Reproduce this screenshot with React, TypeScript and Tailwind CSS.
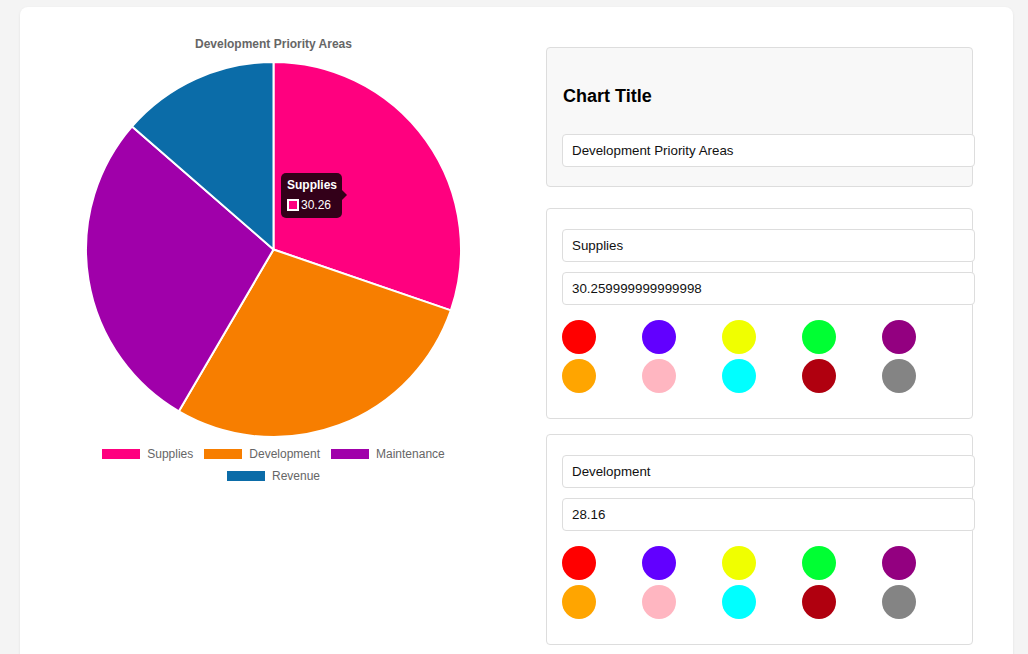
import React from "react";

const slices = [
  { label: "Supplies", value: 30.26, color: "#ff007f" },
  { label: "Development", value: 28.16, color: "#f77e00" },
  { label: "Maintenance", value: 27.98, color: "#a000aa" },
  { label: "Revenue", value: 13.6, color: "#0b6ca8" },
];

const palette = [
  ["bg-[#ff0000]", "bg-[#6200ff]", "bg-[#f0ff00]", "bg-[#00ff33]", "bg-[#930080]"],
  ["bg-[#ffa500]", "bg-[#ffb6c1]", "bg-[#00ffff]", "bg-[#b0000f]", "bg-[#848484]"],
];

function Pie() {
  const cx = 253.5;
  const cy = 189.5;
  const r = 187.5;
  const total = slices.reduce((s, x) => s + x.value, 0);
  let a = -Math.PI / 2;
  const paths = slices.map((s) => {
    const start = a;
    const end = a + (s.value / total) * Math.PI * 2;
    a = end;
    const x1 = cx + r * Math.cos(start);
    const y1 = cy + r * Math.sin(start);
    const x2 = cx + r * Math.cos(end);
    const y2 = cy + r * Math.sin(end);
    const large = end - start > Math.PI ? 1 : 0;
    return (
      <path
        key={s.label}
        d={`M${cx},${cy} L${x1},${y1} A${r},${r} 0 ${large} 1 ${x2},${y2} Z`}
        fill={s.color}
        stroke="#fff"
        strokeWidth={2}
        strokeLinejoin="round"
      />
    );
  });
  return (
    <svg width={507} height={380} className="block">
      {paths}
    </svg>
  );
}

function Field({ value }: { value: string }) {
  return (
    <div className="w-[413px] h-[33px] border border-[#dddddd] rounded-[4px] bg-white pl-[9px] flex items-center text-[13.33px] text-[#111]">
      {value}
    </div>
  );
}

function Swatches() {
  return (
    <div className="flex flex-col gap-[5px] mt-[15px]">
      {palette.map((row, i) => (
        <div key={i} className="flex gap-[46px]">
          {row.map((c) => (
            <div key={c} className={`w-[34px] h-[34px] rounded-full ${c}`} />
          ))}
        </div>
      ))}
    </div>
  );
}

function SeriesPanel({ name, value }: { name: string; value: string }) {
  return (
    <div className="w-[427px] border border-[#dddddd] rounded-[4px] bg-white pl-[15px] pt-[20px] pb-[25px]">
      <Field value={name} />
      <div className="mt-[10px]">
        <Field value={value} />
      </div>
      <Swatches />
    </div>
  );
}

function LegendItem({ label, color }: { label: string; color: string }) {
  return (
    <div className="flex items-center gap-[7px] text-[12px] text-[#666]">
      <div className="w-[38px] h-[10px]" style={{ backgroundColor: color }} />
      <span>{label}</span>
    </div>
  );
}

export default function App() {
  return (
    <div
      className="min-h-[654px] bg-[#f4f4f4] pl-[20px] pr-[15px] pt-[7px]"
      style={{ fontFamily: '"Liberation Sans", Arial, Helvetica, sans-serif' }}
    >
      <div className="bg-white rounded-[8px] shadow-[0_1px_3px_rgba(0,0,0,0.08)] flex min-h-[660px]">
        <div className="w-[507px] pt-[30px] flex flex-col items-center">
          <div className="text-[12px] leading-[14px] font-bold text-[#666]">Development Priority Areas</div>
          <div className="relative mt-[9px]">
            <Pie />
            <div className="absolute left-[261px] top-[113px] w-[61px] h-[45px] rounded-[5px] bg-[rgba(0,0,0,0.8)] text-white px-[6px] pt-[5px]">
              <div className="text-[12px] leading-[14px] font-bold">Supplies</div>
              <div className="flex items-center mt-[6px] text-[12px] leading-[14px]">
                <div className="w-[12px] h-[12px] border-[2px] border-white bg-[#ff007f]" />
                <span className="ml-[2px]">30.26</span>
              </div>
              <div className="absolute right-[-5px] top-[17px] w-0 h-0 border-y-[5px] border-y-transparent border-l-[5px] border-l-[rgba(0,0,0,0.8)]" />
            </div>
          </div>
          <div className="mt-[8px] flex flex-col items-center gap-[10px] leading-[12px]">
            <div className="flex gap-[11px]">
              <LegendItem label="Supplies" color="#ff007f" />
              <LegendItem label="Development" color="#f77e00" />
              <LegendItem label="Maintenance" color="#a000aa" />
            </div>
            <div className="flex gap-[11px]">
              <LegendItem label="Revenue" color="#0b6ca8" />
            </div>
          </div>
        </div>
        <div className="ml-[19px] mt-[40px] flex flex-col">
          <div className="w-[427px] border border-[#dddddd] rounded-[4px] bg-[#f8f8f8] pl-[15px] pt-[37px] pb-[19px]">
            <div className="text-[18px] leading-[22px] font-bold text-black pl-[1px]">Chart Title</div>
            <div className="mt-[27px]">
              <Field value="Development Priority Areas" />
            </div>
          </div>
          <div className="mt-[21px]">
            <SeriesPanel name="Supplies" value="30.259999999999998" />
          </div>
          <div className="mt-[15px]">
            <SeriesPanel name="Development" value="28.16" />
          </div>
        </div>
      </div>
    </div>
  );
}
